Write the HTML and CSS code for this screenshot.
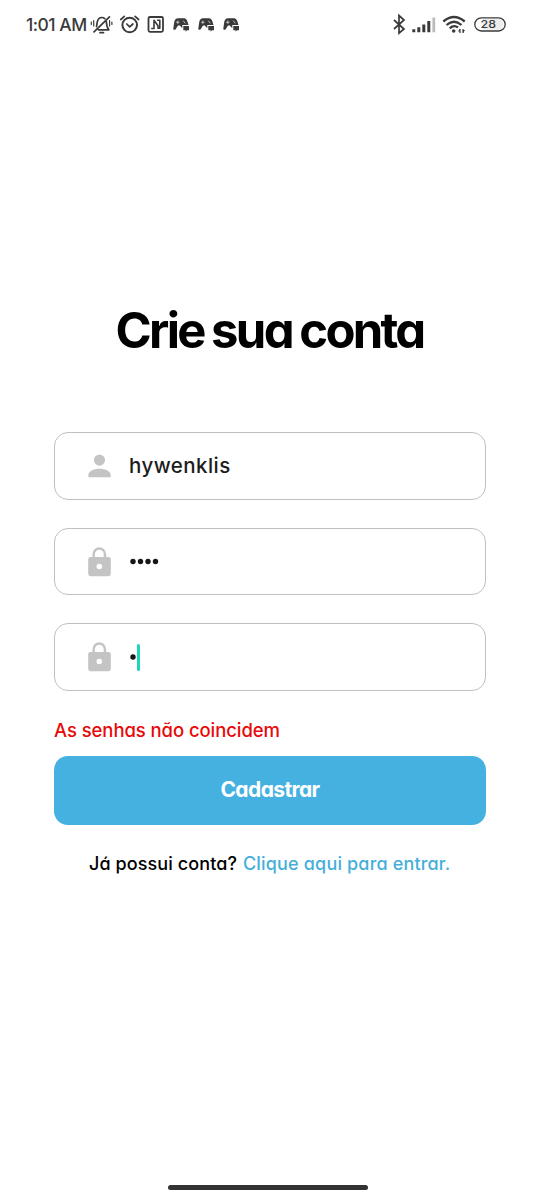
FILE: index.html
```html
<!DOCTYPE html>
<html lang="pt-BR">
<head>
<meta charset="utf-8">
<meta name="viewport" content="width=device-width, initial-scale=1">
<title>Crie sua conta</title>
<link rel="stylesheet" href="styles.css">
</head>
<body>
<header class="status">
  <span class="clock">1:01 AM</span>
  <svg class="status-icons" width="152" height="24" viewBox="90 12 152 24" fill="none" stroke="#3a3a3a" stroke-width="1.7" stroke-linecap="round" stroke-linejoin="round">
    <path d="M96.500 26.500C97.500 24 96 18 101.500 17.500C103 17.400 104 17.900 104.800 18.600M106.300 21.500C106.500 25 107 27.500 108.800 29.800H98.500M100 32.700h3.500M94 31.800L109.500 16.800"/>
    <path d="M93.700 20.500v5.500M91.300 22v2.500M109.600 20.500v5.500M111.900 22v2.500" stroke-width="1.200"/>
    <circle cx="129.700" cy="25" r="7.300" stroke-width="2"/><path d="M126.800 24l2.900 2.800 3.200-2.800M120.800 19.500l3.500-3.200M138.600 19.500l-3.500-3.200"/>
    <rect x="148.500" y="17" width="14.500" height="14.800" rx="1.500" stroke-width="1.800"/>
    <path d="M151.800 28.500h2.200v-8.200l4 5.500v2.500h1.800v-8h-2.200" stroke-width="1.600"/>
    <g id="game" fill="#3a3a3a" stroke="none"><path d="M173.300 28.500L174.300 21.800Q175 18.200 178 18.200H184Q186.500 18.200 187.500 21.800L188.500 25H182.300V28.300L179.800 25.500H178L175.500 29.500Q173.100 30.500 173.300 28.500Z"/><path d="M183.300 26h5.700v4.300h-2l-1.300 1.500v-1.500h-2.400z"/><path d="M177.800 21v2.500M176.500 22.200h2.600M183.500 21l1.500 2" stroke="#ddd" stroke-width=".8"/></g>
    <use href="#game" x="25"/><use href="#game" x="50"/>
  </svg>
  <svg class="status-icons right" width="116" height="24" viewBox="392 12 116 24" fill="none" stroke="#3a3a3a" stroke-width="1.700">
    <path d="M394 20l10 9-5 4.200V15.500l5 4.500-10 9"/>
    <path d="M413.800 29.300v3M418.800 27.300v5M423.800 24.500v7.800M428.800 21v11.300" stroke-width="3"/><path d="M433.800 17.500v14.800" stroke="#bbb" stroke-width="2.800"/>
    <path d="M443.300 21.500Q454 12.500 464.700 21.500M446.500 25Q454 18.500 461.500 25M449.700 28.300Q454 24.500 458 27.500" stroke-width="2.300"/>
    <circle cx="453.700" cy="31" r="1.800" fill="#3a3a3a" stroke="none"/><path d="M460 29v4M463 29v4" stroke-width="1.200"/><path d="M458 31.500l2-3v3zM465 30l-2 3v-3z" fill="#3a3a3a" stroke="none"/>
    <path d="M483 19h15a5.400 5.400 0 0 1 4 9l-2 1.800H483z" fill="#ececec" stroke="none"/>
    <rect x="474.800" y="17.800" width="30.400" height="13.200" rx="6.600" stroke-width="1.300"/>
    <text class="battery" x="480.500" y="28.300" textLength="15.500" lengthAdjust="spacingAndGlyphs">28</text>
  </svg>
</header>
<main class="signup">
  <h1 class="title">Crie sua conta</h1>
  <form class="form">
    <div class="field">
      <svg class="icon" width="24" height="30" viewBox="0 0 24 30" fill="#c4c4c4"><circle cx="11.500" cy="9.100" r="5.600"/><path d="M.3 26.300V24C.3 20.300 5.500 17.700 11.500 17.700S22.700 20.300 22.700 24v2.300z"/></svg>
      <span class="value">hywenklis</span>
    </div>
    <div class="field">
      <svg class="icon" width="24" height="30" viewBox="0.5 0.4 24 30"><path d="M6.200 11V7.500a5.600 5.600 0 0 1 11.200 0V11" fill="none" stroke="#c4c4c4" stroke-width="2.400"/><path fill="#c4c4c4" fill-rule="evenodd" d="M3.100 10.300h17.800a2.400 2.400 0 0 1 2.400 2.400v14.500a2.400 2.400 0 0 1-2.400 2.400H3.100a2.400 2.400 0 0 1-2.400-2.400V12.700a2.400 2.400 0 0 1 2.400-2.400zM11.800 17.100a2.800 2.800 0 1 0 0 5.600a2.800 2.800 0 1 0 0-5.600z"/></svg>
      <svg class="dots" width="32" height="8" viewBox="0 0.5 32 8" fill="#161616"><circle cx="4" cy="4" r="2.700"/><circle cx="11.500" cy="4" r="2.700"/><circle cx="19" cy="4" r="2.700"/><circle cx="26.500" cy="4" r="2.700"/></svg>
    </div>
    <div class="field">
      <svg class="icon" width="24" height="30" viewBox="0.5 0.4 24 30"><path d="M6.200 11V7.500a5.600 5.600 0 0 1 11.200 0V11" fill="none" stroke="#c4c4c4" stroke-width="2.400"/><path fill="#c4c4c4" fill-rule="evenodd" d="M3.100 10.300h17.800a2.400 2.400 0 0 1 2.400 2.400v14.500a2.400 2.400 0 0 1-2.400 2.400H3.100a2.400 2.400 0 0 1-2.400-2.400V12.700a2.400 2.400 0 0 1 2.400-2.400zM11.800 17.100a2.800 2.800 0 1 0 0 5.600a2.800 2.800 0 1 0 0-5.600z"/></svg>
      <svg class="dots" width="7" height="8" viewBox="0 0 7 8" fill="#161616"><circle cx="4" cy="4" r="2.700"/></svg><span class="caret"></span>
    </div>
    <p class="error">As senhas não coincidem</p>
    <button class="submit" type="button">Cadastrar</button>
  </form>
  <p class="login"><span class="ask">Já possui conta?</span><a class="link">Clique aqui para entrar.</a></p>
</main>
<div class="home-bar"></div>
</body>
</html>
```
FILE: styles.css
```css
* { box-sizing: border-box; }
body {
  margin: 0;
  height: 1200px;
  display: flex;
  flex-direction: column;
  background: #fff;
  color: #000;
  font-family: Inter, "Open Sans", sans-serif;
  font-feature-settings: "cv11" 1;
  overflow: hidden;
}
p, h1 { margin: 0; }
.status {
  height: 48px;
  padding: 0 32px 0 26px;
  display: flex;
  align-items: center;
  color: #3a3a3a;
}
.clock { width: 64px; font-size: 17.5px; font-weight: 500; letter-spacing: -0.5px; white-space: nowrap; }
.right { margin-left: auto; }
.battery { font: 500 11px Inter, sans-serif; fill: #3a3a3a; stroke: none; }
.signup { padding: 0 54px; }
.title {
  margin-top: 253px;
  height: 60px;
  line-height: 60px;
  font-size: 49px;
  font-weight: 700;
  letter-spacing: -2.7px;
  word-spacing: -1.5px;
  text-indent: -1px;
  text-align: center;
  white-space: nowrap;
}
.form { margin-top: 71px; display: flex; flex-direction: column; }
.field {
  height: 67.8px;
  margin-bottom: 27.9px;
  padding-left: 33px;
  display: flex;
  align-items: center;
  border: 1.4px solid #c0c0c0;
  border-radius: 14px;
}
.icon { flex: none; }
.value { margin: 0 0 1px 17px; font-size: 20.5px; font-weight: 500; letter-spacing: 0.45px; color: #1c1c1c; }
.dots { margin-left: 17px; }
.caret { width: 3px; height: 27px; margin-left: 0.6px; border-radius: 1.5px; background: #1fd3bd; }
.error { height: 24px; line-height: 23px; font-size: 18.5px; font-weight: 500; letter-spacing: -0.08px; color: #e80808; white-space: nowrap; }
.submit {
  height: 69px;
  margin-top: 13px;
  padding: 0 0 2px;
  border: 0;
  border-radius: 14px;
  background: #45b1e0;
  color: #fff;
  font: inherit;
  font-size: 21px;
  font-weight: 700;
  letter-spacing: -0.6px;
}
.login { margin: 27px 0 0 35px; display: flex; height: 24px; line-height: 24px; font-size: 18px; font-weight: 500; white-space: nowrap; }
.ask { width: 154px; letter-spacing: 0.1px; }
.link { color: #45afd9; letter-spacing: 0.17px; }
.home-bar { width: 200px; height: 5px; margin: auto 0 10px 168px; border-radius: 3px; background: #333; }
```
